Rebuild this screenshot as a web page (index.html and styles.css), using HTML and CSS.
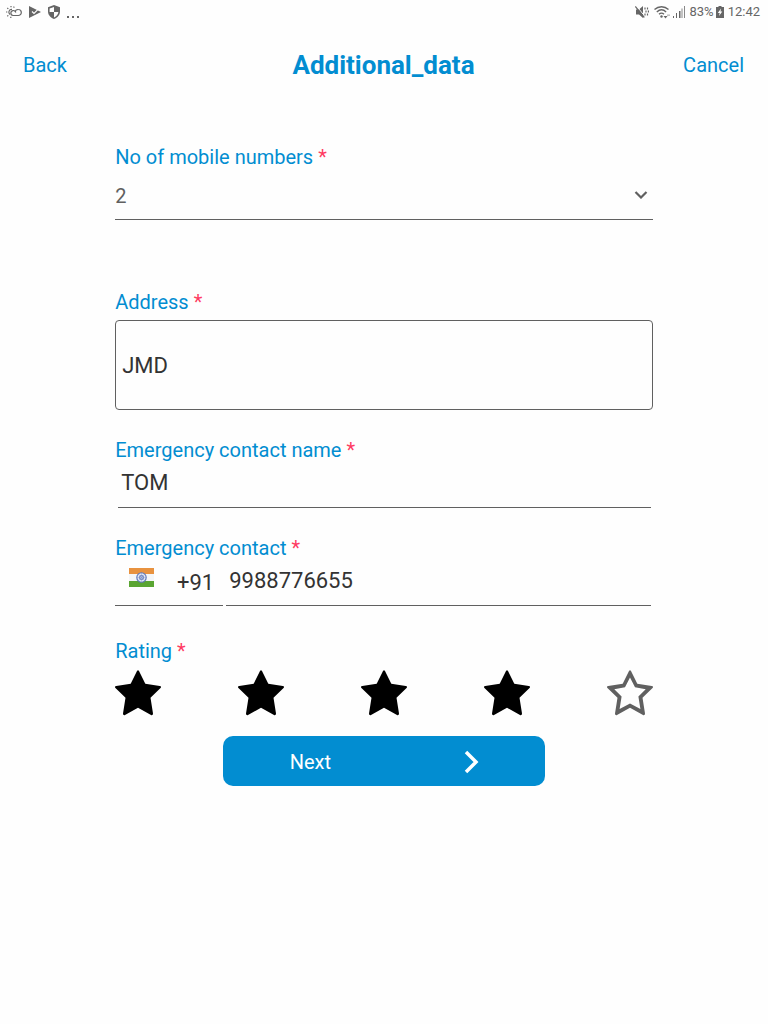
FILE: index.html
```html
<!DOCTYPE html>
<html lang="en">
<head>
<meta charset="utf-8">
<meta name="viewport" content="width=device-width, initial-scale=1">
<title>Additional_data</title>
<link rel="stylesheet" href="styles.css">
</head>
<body>
<div class="status">
  <div class="status-left">
    <svg class="ic" width="16" height="14" viewBox="0 0 16 14" fill="none" stroke="#666" stroke-width="1.2"><path d="M7 10.500h5.300a2.700 2.700 0 0 0 0-6 3.200 3.200 0 0 0-3.300 2.500M9.800 7.500A2.500 2.500 0 1 0 7 10.500"/><path d="M4 9.500A2.900 2.900 0 0 1 6 4.300"/><path d="M0 7h1.300M1.300 3l1 .9M5 .9v1.300M1.300 11.300l1-.9M8.200 1.600l-.6 1M4.800 13v-1.200" stroke-width="1.200"/></svg>
    <svg class="ic play" width="12" height="12" viewBox="0 0 12 12"><path fill="#666" d="M0 0l12 6L0 12z"/><path d="M3 5.500l2 2 4.500-4.700" fill="none" stroke="#fff" stroke-width="1.100"/></svg>
    <svg class="ic shield" width="12" height="14" viewBox="0 0 12 14"><path fill="#666" d="M6 0l6 2.300v4.200c0 3.500-2.500 6.300-6 7.500-3.500-1.200-6-4-6-7.500V2.300z"/><path fill="#fff" d="M6 2v5h4.400C10 9.500 8.500 11.400 6 12.400V7H1.600V3.600z"/></svg>
    <svg class="ic dots" width="12" height="14" viewBox="0 0 12 14" fill="#666"><path d="M0 10h2v2H0zM5 10h2v2H5zM10 10h2v2h-2z"/></svg>
  </div>
  <div class="status-right">
    <svg class="ic" width="14" height="14" viewBox="0 0 14 14"><path fill="#666" d="M1 4.500h3l4-3.500v12L4 9.500H1z"/><path d="M1 .5l9 11" stroke="#fff" stroke-width="1"/><path d="M.3 1.500l9 11M10 2.500v2M12.500 2.500v2M11 5.500v2M13.400 5.500v2M10 8.500v2M12.500 8.500v2" fill="none" stroke="#666" stroke-width="1.200"/></svg>
    <svg class="ic wifi" width="17" height="14" viewBox="0 0 17 14" fill="none" stroke="#666" stroke-width="1.400"><path d="M.5 4.500c4-3.700 10-3.700 14 0M2.800 7c3-2.700 6.500-2.700 9.300 0M5 9.300c1.500-1.400 3.500-1.400 5 0"/><circle cx="7.500" cy="11.500" r="1.200" fill="#666" stroke="none"/><path fill="#666" stroke="none" d="M9.500 11h4l-2 2.500z"/><path stroke="#bbb" d="M13 10.200h3"/></svg>
    <svg class="ic signal" width="12" height="14" viewBox="0 0 12 14"><path fill="#666" d="M0 11h1v2H0zM3 8h1v5H3zM6 6h1.500v7H6z"/><path fill="#888" d="M8.500 3.500h1V13h-1zM11 1h1v12h-1z"/></svg>
    <span class="pct">83%</span>
    <svg class="ic" width="8" height="12" viewBox="0 0 8 12"><path fill="#666" d="M2.500 0h3v1H8v11H0V1h2.500z"/><path fill="#fff" d="M5 2.500L1.800 7h1.900L3 10l3.300-4.600H4.500z"/></svg>
    <span class="clock">12:42</span>
  </div>
</div>
<header class="header">
  <button type="button" class="nav">Back</button>
  <h1 class="title">Additional_data</h1>
  <button type="button" class="nav nav-end">Cancel</button>
</header>
<form class="form">
  <div class="field field-count">
    <label class="label" for="count">No of mobile numbers <span class="req">*</span></label>
    <div class="select-wrap">
      <select id="count" class="select"><option>1</option><option selected>2</option><option>3</option></select>
      <svg class="chevron" width="14" height="8" viewBox="0 0 14 8"><path d="M1.500 1L7 6.500 12.500 1" fill="none" stroke="#606060" stroke-width="2.200"/></svg>
    </div>
  </div>
  <div class="field field-address">
    <label class="label" for="address">Address <span class="req">*</span></label>
    <input id="address" class="box" type="text" value="JMD">
  </div>
  <div class="field field-name">
    <label class="label" for="name">Emergency contact name <span class="req">*</span></label>
    <input id="name" class="line" type="text" value="TOM">
  </div>
  <div class="field field-phone">
    <label class="label" for="phone">Emergency contact <span class="req">*</span></label>
    <div class="phone">
      <button type="button" class="code">
        <svg class="flag" width="25" height="19" viewBox="0 0 25 19"><path fill="#e8923f" d="M0 0h25v6H0z"/><path fill="#f4f6f8" d="M0 6h25v7H0z"/><path fill="#5aa532" d="M0 13h25v6H0z"/><circle cx="12.500" cy="9.500" r="4.700" fill="#dfe5f3" stroke="#5c75b8" stroke-width="1.100"/><circle cx="12.500" cy="9.500" r="2" fill="#c5cfea" stroke="#5c75b8"/><path d="M12.500 5v9M8 9.500h9M9.300 6.300l6.400 6.400M15.700 6.300l-6.400 6.400" stroke="#7c90c8" stroke-width=".4"/></svg>
        <span>+91</span>
      </button>
      <input id="phone" class="line number" type="tel" value="9988776655">
    </div>
  </div>
  <fieldset class="rating">
    <legend class="label">Rating <span class="req">*</span></legend>
    <div class="stars">
      <label class="star"><input type="radio" name="rating" aria-label="1 star"><svg width="46" height="46" viewBox="0 0 46 46"><path class="full" d="M22 1Q23-.5 24 1L30.300 13.700 44.800 16Q47 16.500 45.300 18.200L35.500 27.700 38 43.500Q38 45.700 36 45L23 37.800 10 45Q8 45.700 8 43.500L10.500 27.700.7 18.200Q-1 16.500 1.200 16L15.700 13.700z"/></svg></label>
      <label class="star"><input type="radio" name="rating" aria-label="2 stars"><svg width="46" height="46" viewBox="0 0 46 46"><path class="full" d="M22 1Q23-.5 24 1L30.300 13.700 44.800 16Q47 16.500 45.300 18.200L35.500 27.700 38 43.500Q38 45.700 36 45L23 37.800 10 45Q8 45.700 8 43.500L10.500 27.700.7 18.200Q-1 16.500 1.200 16L15.700 13.700z"/></svg></label>
      <label class="star"><input type="radio" name="rating" aria-label="3 stars"><svg width="46" height="46" viewBox="0 0 46 46"><path class="full" d="M22 1Q23-.5 24 1L30.300 13.700 44.800 16Q47 16.500 45.300 18.200L35.500 27.700 38 43.500Q38 45.700 36 45L23 37.800 10 45Q8 45.700 8 43.500L10.500 27.700.7 18.200Q-1 16.500 1.200 16L15.700 13.700z"/></svg></label>
      <label class="star"><input type="radio" name="rating" aria-label="4 stars" checked><svg width="46" height="46" viewBox="0 0 46 46"><path class="full" d="M22 1Q23-.5 24 1L30.300 13.700 44.800 16Q47 16.500 45.300 18.200L35.500 27.700 38 43.500Q38 45.700 36 45L23 37.800 10 45Q8 45.700 8 43.500L10.500 27.700.7 18.200Q-1 16.500 1.200 16L15.700 13.700z"/></svg></label>
      <label class="star"><input type="radio" name="rating" aria-label="5 stars"><svg width="46" height="46" viewBox="0 0 46 46"><path class="empty" d="M22 1Q23-.5 24 1L30.300 13.700 44.800 16Q47 16.500 45.300 18.200L35.500 27.700 38 43.500Q38 45.700 36 45L23 37.800 10 45Q8 45.700 8 43.500L10.500 27.700.7 18.200Q-1 16.500 1.200 16L15.700 13.700zM23 7.500L18 17.300 7.300 19.200 14.600 26.400 12.600 39 23 33.500 33.400 39 31.400 26.400 38.700 19.200 28 17.300z"/></svg></label>
    </div>
  </fieldset>
  <button type="submit" class="next"><span>Next</span><svg width="16" height="24" viewBox="0 0 16 24"><path d="M2 2l10 10L2 22" fill="none" stroke="#fff" stroke-width="3.500"/></svg></button>
</form>
</body>
</html>
```
FILE: styles.css
```css
* { box-sizing: border-box; }
body {
  margin: 0;
  background: #fefefe;
  color: #333;
  font: 20px/24px Roboto, sans-serif;
}
button, input, select { font: inherit; color: inherit; border: 0; border-radius: 0; background: none; padding: 0; margin: 0; }
svg { display: block; flex: none; }
.status {
  display: flex;
  justify-content: space-between;
  height: 24px;
  padding: 0 8px 0 6px;
  color: #666;
  font-size: 13px;
}
.status-left, .status-right { display: flex; align-items: center; }
.play { margin-left: 7px; }
.shield { margin-left: 7px; }
.dots { margin: 2px 0 0 7px; }
.wifi { margin-left: 5px; }
.signal { margin: 0 4px 0 2px; }
.pct { margin-right: 2px; }
.clock { margin-left: 4px; }
.header {
  display: grid;
  grid-template-columns: 1fr auto 1fr;
  align-items: center;
  height: 82px;
  padding: 0 24px 0 23px;
  color: #028dd1;
}
.nav { justify-self: start; }
.nav-end { justify-self: end; }
.title { margin: 0; font-size: 26px; line-height: 32px; font-weight: 700; }
.form { display: flex; flex-direction: column; width: 70%; margin: 39px auto 0; }
.field { display: flex; flex-direction: column; }
.label { display: block; padding: 0; color: #028dd1; }
.req { color: #ff3b62; }
.select-wrap {
  display: grid;
  align-items: center;
  margin-top: 3px;
  border-bottom: 1px solid #606060;
}
.select, .chevron { grid-area: 1 / 1; }
.select { appearance: none; width: 100%; height: 47px; color: #606060; }
.chevron { justify-self: end; margin: 0 5px 2px 0; pointer-events: none; }
.field-address { margin-top: 70px; }
.box {
  width: 100%;
  height: 90px;
  margin-top: 6px;
  padding: 0 6px;
  border: 1px solid #606060;
  border-radius: 4px;
  font-size: 22px;
}
.field-name { margin-top: 28px; }
.line {
  height: 46px;
  margin: 0 2px 0 3px;
  padding: 0 3px 4px;
  border-bottom: 1px solid #606060;
  font-size: 22px;
}
.field-phone { margin-top: 28px; }
.phone { display: flex; }
.code {
  display: flex;
  align-items: center;
  justify-content: space-between;
  width: 108px;
  height: 46px;
  padding: 1px 9px 0 14px;
  border-bottom: 1px solid #606060;
  font-size: 22px;
}
.flag { margin-bottom: 12px; }
.number { flex: 1; min-width: 0; }
.rating { min-width: 0; margin: 33px 0 0; padding: 0; border: 0; }
.stars { display: flex; justify-content: space-between; margin-top: 7px; }
.star { position: relative; cursor: pointer; }
.star input { position: absolute; inset: 0; opacity: 0; }
.full { fill: #000; }
.empty { fill: #606060; fill-rule: evenodd; }
.next {
  display: flex;
  align-items: center;
  justify-content: space-between;
  align-self: center;
  width: 60%;
  height: 50px;
  margin-top: 20px;
  padding: 2px 65px 0 67px;
  border-radius: 10px;
  background: #028dd1;
  color: #fff;
}
```
